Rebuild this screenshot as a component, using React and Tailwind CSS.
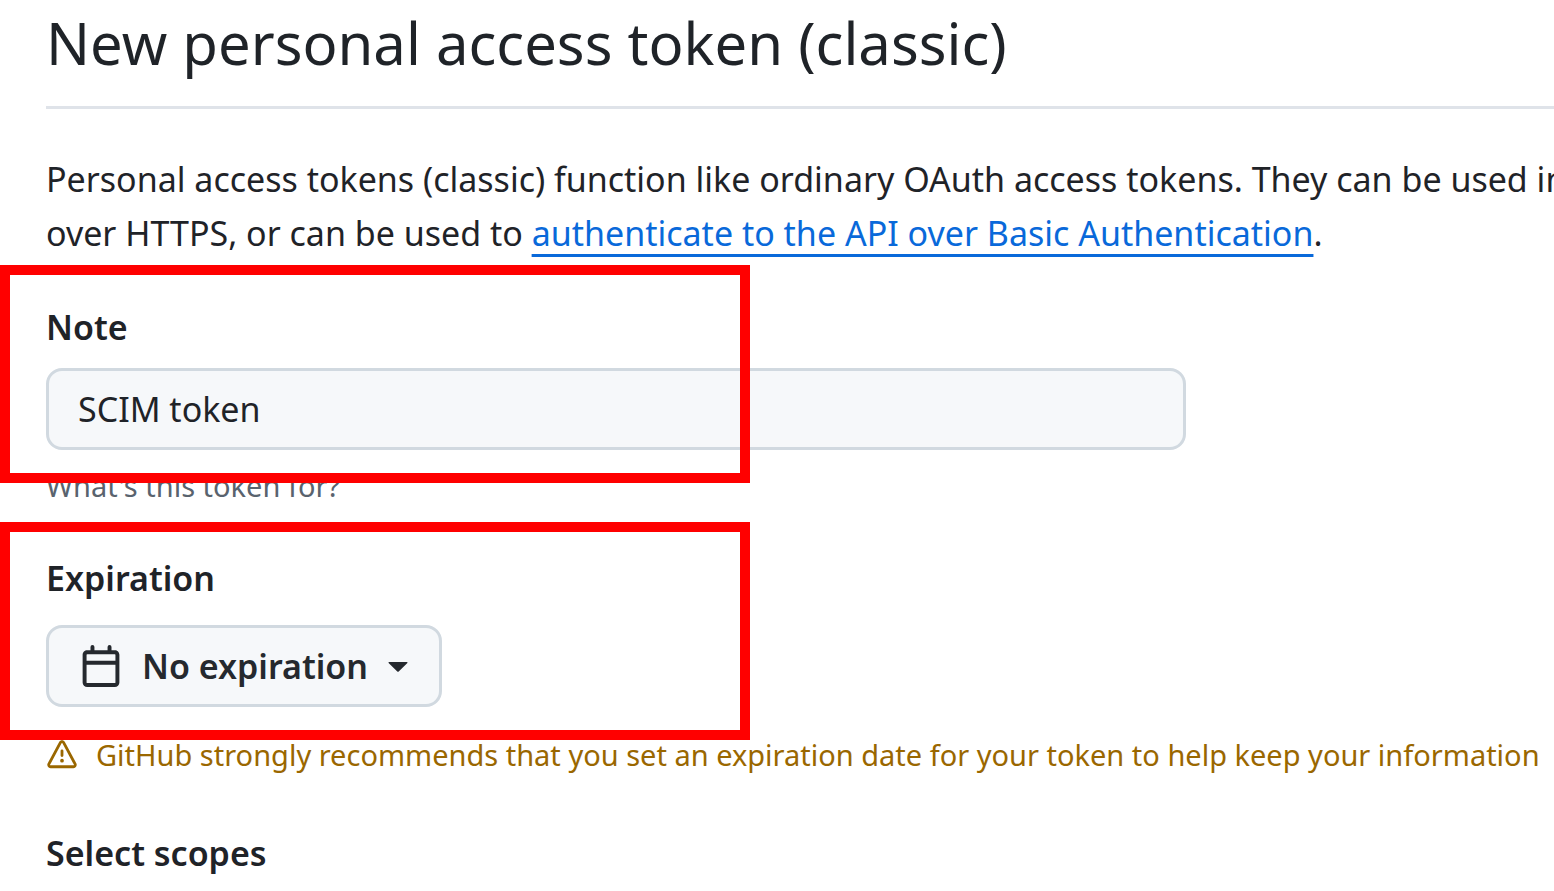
import React, { useState } from 'react';

const CalendarIcon = () => (
  <svg width="42" height="42" viewBox="0 0 16 16" fill="currentColor" aria-hidden="true" className="pointer-events-none shrink-0">
    <path d="M4.75 0a.75.75 0 0 1 .75.75V2h5V.75a.75.75 0 0 1 1.5 0V2h1.25c.966 0 1.75.784 1.75 1.75v10.5A1.75 1.75 0 0 1 13.25 16H2.75A1.75 1.75 0 0 1 1 14.25V3.75C1 2.784 1.784 2 2.75 2H4V.75A.75.75 0 0 1 4.75 0ZM2.5 7.5v6.75c0 .138.112.25.25.25h10.5a.25.25 0 0 0 .25-.25V7.5Zm10.75-4H2.75a.25.25 0 0 0-.25.25V6h11V3.75a.25.25 0 0 0-.25-.25Z" />
  </svg>
);

const CaretIcon = () => (
  <svg width="20" height="12" viewBox="0 0 20 12" fill="currentColor" aria-hidden="true" className="pointer-events-none shrink-0">
    <path d="M1 2h18a.6.6 0 0 1 .4 1L10.7 11.5a1 1 0 0 1-1.4 0L.6 3A.6.6 0 0 1 1 2Z" />
  </svg>
);

const AlertIcon = () => (
  <svg width="32" height="30" viewBox="0 0 16 16" fill="currentColor" aria-hidden="true" className="shrink-0">
    <path d="M6.457 1.047c.659-1.234 2.427-1.234 3.086 0l6.082 11.378A1.75 1.75 0 0 1 14.082 15H1.918a1.75 1.75 0 0 1-1.543-2.575Zm1.763.707a.25.25 0 0 0-.44 0L1.698 13.132a.25.25 0 0 0 .22.368h12.164a.25.25 0 0 0 .22-.368Zm.53 3.996v2.5a.75.75 0 0 1-1.5 0v-2.5a.75.75 0 0 1 1.5 0ZM9 11a1 1 0 1 1-2 0 1 1 0 0 1 2 0Z" />
  </svg>
);

// Red frame laid over a form group
const Highlight = () => (
  <div className="pointer-events-none absolute top-0 left-0 h-[218px] w-[750px] border-10 border-[#ff0000]" />
);

const App = () => {
  const [note, setNote] = useState('SCIM token');
  const [expiration, setExpiration] = useState('none');

  return (
    <main className="min-h-screen overflow-hidden bg-white pb-2 font-['Noto_Sans',sans-serif] text-[34px] text-[#1f2328]">
      <header className="ml-[46px] border-b-3 border-[#dfe3e9] pb-5">
        <h1 className="text-[58px] leading-[86px] whitespace-nowrap">New personal access token (classic)</h1>
      </header>

      <p className="mt-[43px] ml-[46px] leading-[54px] whitespace-nowrap">
        Personal access tokens (classic) function like ordinary OAuth access tokens. They can be used in
        <br />
        over HTTPS, or can be used to{' '}
        <a href="#basic-auth" className="text-[#0969da] underline decoration-3 underline-offset-8">
          authenticate to the API over Basic Authentication
        </a>
        .
      </p>

      <form onSubmit={(e) => e.preventDefault()}>
        {/* Note */}
        <div className="relative mt-[5px] h-[257px] pt-[35px] pl-[46px]">
          <label htmlFor="note" className="block leading-[54px] font-semibold">Note</label>
          <input
            id="note"
            type="text"
            value={note}
            onChange={(e) => setNote(e.target.value)}
            className="mt-[14px] block h-[82px] w-[1140px] max-w-full rounded-2xl border-3 border-[#d1d9e0] bg-[#f6f8fa] px-[29px]"
          />
          <p className="mt-3 text-[29px] leading-[48px] text-[#59636e]">What's this token for?</p>
          <Highlight />
        </div>

        {/* Expiration */}
        <div className="relative h-[218px] pt-[29px] pl-[46px]">
          <label htmlFor="expiration" className="block leading-[54px] font-semibold">Expiration</label>
          <div className="mt-5 flex h-[82px] w-[396px] items-center rounded-2xl border-3 border-[#d1d9e0] bg-[#f6f8fa] px-[31px] text-[#25292e]">
            <CalendarIcon />
            <select
              id="expiration"
              value={expiration}
              onChange={(e) => setExpiration(e.target.value)}
              className="mr-4 ml-5 min-w-0 flex-1 appearance-none bg-transparent font-semibold"
            >
              <option value="none">No expiration</option>
            </select>
            <CaretIcon />
          </div>
          <Highlight />
        </div>

        <p className="flex items-start gap-[18px] pl-[46px] text-[29px] leading-[30px] whitespace-nowrap text-[#9a6700]">
          <AlertIcon />
          GitHub strongly recommends that you set an expiration date for your token to help keep your information
        </p>

        <h2 className="mt-14 ml-[46px] leading-[54px] font-semibold">Select scopes</h2>
      </form>
    </main>
  );
};

export default App;
